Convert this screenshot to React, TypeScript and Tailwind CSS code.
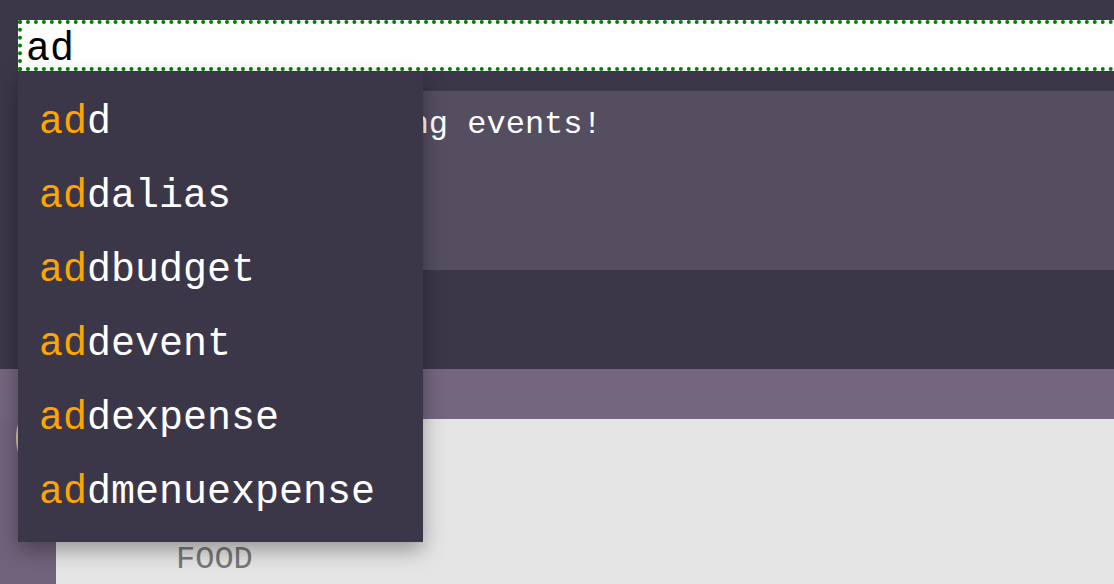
import React from "react";

const commands = [
  "add",
  "addalias",
  "addbudget",
  "addevent",
  "addexpense",
  "addmenuexpense",
];

const mono = { fontFamily: "'Liberation Mono', 'Courier New', monospace" };

const App = () => {
  const typed = "ad";
  return (
    <div
      className="relative w-[1114px] h-[584px] overflow-hidden bg-[#3c3748]"
      style={mono}
    >
      {/* top: command input + events panel */}
      <div className="flex flex-col h-[369px] pt-[20px] pl-[18px]">
        <div className="w-[1120px] h-[51px] border-4 border-r-0 border-dotted border-[#008000] bg-white pl-[4px] pt-[6px] text-[40px] leading-[40px] text-black">
          {typed}
        </div>
        <div className="mt-[20px] w-[1120px] h-[179px] bg-[#544e60] pl-[46px] pt-[10px]">
          <div className="text-[32px] text-white">You have no upcoming events!</div>
        </div>
      </div>

      {/* bottom: header bar, sidebar, content */}
      <div className="h-[50px] bg-[#74667f]" />
      <div className="flex h-[165px]">
        <div className="relative w-[56px] bg-[#72637c]">
          <div className="absolute left-[16px] top-[-31px] w-[100px] h-[100px] rounded-full bg-[#d8d19a]" />
        </div>
        <div className="flex-1 bg-[#e5e5e5] pl-[120px] pt-[117px]">
          <div className="text-[32px] text-[#777777]">FOOD</div>
        </div>
      </div>

      {/* autocomplete list */}
      <div className="absolute left-[18px] top-[72px] w-[405px] h-[470px] bg-[#3c3748] pt-[14px] shadow-[0_8px_20px_rgba(0,0,0,0.35)]">
        {commands.map((c) => (
          <div key={c} className="h-[74px] flex items-center pl-[21px] text-[40px] text-white">
            <span className="text-[#ffa500]">{c.slice(0, typed.length)}</span>
            <span>{c.slice(typed.length)}</span>
          </div>
        ))}
      </div>
    </div>
  );
};

export default App;
